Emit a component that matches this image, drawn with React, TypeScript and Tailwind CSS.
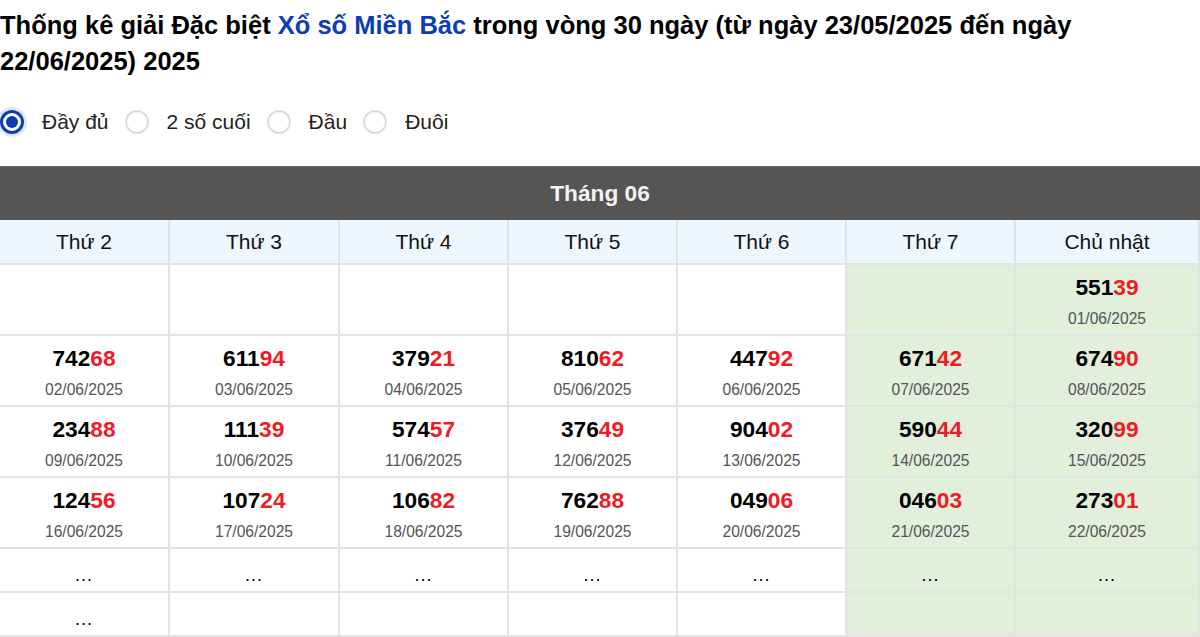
import React from "react";

type Cell = { num: string; date: string } | "empty" | "dots";

const days = ["Thứ 2", "Thứ 3", "Thứ 4", "Thứ 5", "Thứ 6", "Thứ 7", "Chủ nhật"];

const rows: Cell[][] = [
  ["empty", "empty", "empty", "empty", "empty", "empty", { num: "55139", date: "01/06/2025" }],
  [
    { num: "74268", date: "02/06/2025" },
    { num: "61194", date: "03/06/2025" },
    { num: "37921", date: "04/06/2025" },
    { num: "81062", date: "05/06/2025" },
    { num: "44792", date: "06/06/2025" },
    { num: "67142", date: "07/06/2025" },
    { num: "67490", date: "08/06/2025" },
  ],
  [
    { num: "23488", date: "09/06/2025" },
    { num: "11139", date: "10/06/2025" },
    { num: "57457", date: "11/06/2025" },
    { num: "37649", date: "12/06/2025" },
    { num: "90402", date: "13/06/2025" },
    { num: "59044", date: "14/06/2025" },
    { num: "32099", date: "15/06/2025" },
  ],
  [
    { num: "12456", date: "16/06/2025" },
    { num: "10724", date: "17/06/2025" },
    { num: "10682", date: "18/06/2025" },
    { num: "76288", date: "19/06/2025" },
    { num: "04906", date: "20/06/2025" },
    { num: "04603", date: "21/06/2025" },
    { num: "27301", date: "22/06/2025" },
  ],
  ["dots", "dots", "dots", "dots", "dots", "dots", "dots"],
  ["dots", "empty", "empty", "empty", "empty", "empty", "empty"],
];

const options = ["Đầy đủ", "2 số cuối", "Đầu", "Đuôi"];

const App = () => {
  return (
    <div className="w-[1200px] bg-white text-black font-['Liberation_Sans',Arial,sans-serif]">
      <h1 className="pt-[7px] text-[25.5px] leading-[36px] font-bold">
        Thống kê giải Đặc biệt <span className="text-[#0d3cb4]">Xổ số Miền Bắc</span> trong vòng 30
        ngày (từ ngày 23/05/2025 đến ngày 22/06/2025) 2025
      </h1>

      <div className="mt-[31px] flex items-center h-[24px]">
        {options.map((o, i) => (
          <div key={o} className="flex items-center">
            {i === 0 ? (
              <span className="w-[24px] h-[24px] rounded-full border-[3px] border-[#0d3cb4] flex items-center justify-center shadow-[0_0_0_3px_rgba(13,60,180,0.12)]">
                <span className="w-[12px] h-[12px] rounded-full bg-[#0d3cb4]" />
              </span>
            ) : (
              <span className="w-[24px] h-[24px] rounded-full border-2 border-[#dcdcdc]" />
            )}
            <span className="ml-[18px] mr-[16px] text-[21px] leading-[24px] text-[#222]">{o}</span>
          </div>
        ))}
      </div>

      <div className="mt-[32px]">
        <div className="h-[54px] bg-[#555555] border-t border-[#6a6a6a] flex items-center justify-center text-[22.7px] font-bold text-[#f2f2f2]">
          Tháng 06
        </div>
        <div className="grid grid-cols-[170px_170px_169px_169px_169px_169px_1fr]">
          {days.map((d) => (
            <div
              key={d}
              className="h-[45px] bg-[#eef6fe] border-r-2 border-b-2 border-[#e3e3e3] flex items-center justify-center text-[21px] text-[#111]"
            >
              {d}
            </div>
          ))}
          {rows.map((row, ri) =>
            row.map((c, ci) => {
              const green = ci >= 5;
              const h = ri >= 4 ? "h-[44px]" : "h-[71px]";
              return (
                <div
                  key={ri + "-" + ci}
                  className={`${h} ${green ? "bg-[#e1efdb]" : "bg-white"} border-r-2 border-b-2 border-[#e3e3e3] flex flex-col items-center justify-start`}
                >
                  {c === "dots" ? (
                    <span className="mt-[16px] text-[18px] leading-[20px] tracking-[1px]">...</span>
                  ) : c === "empty" ? null : (
                    <>
                      <span className="mt-[9px] text-[22.7px] leading-[26px] font-bold">
                        {c.num.slice(0, 3)}
                        <span className="text-[#ee1c25]">{c.num.slice(3)}</span>
                      </span>
                      <span className="mt-[9px] text-[15.6px] leading-[20px] text-[#555]">{c.date}</span>
                    </>
                  )}
                </div>
              );
            })
          )}
        </div>
      </div>
    </div>
  );
};

export default App;
